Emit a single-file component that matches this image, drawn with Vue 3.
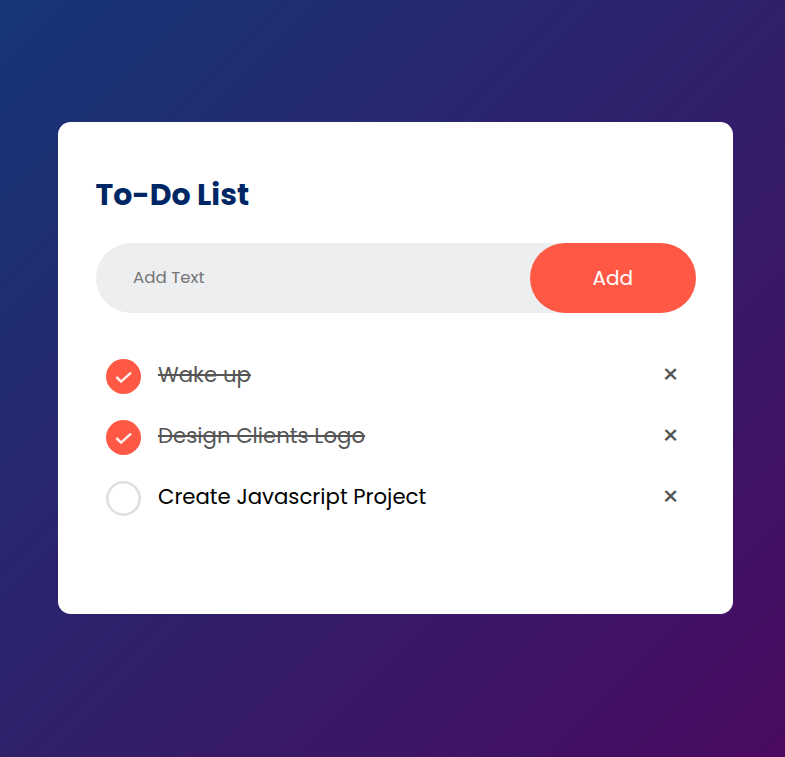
<script setup>
import { ref } from 'vue'

const draft = ref('')
const tasks = ref([
  { id: 1, text: 'Wake up', done: true },
  { id: 2, text: 'Design Clients Logo', done: true },
  { id: 3, text: 'Create Javascript Project', done: false },
])

function addTask() {
  const text = draft.value.trim()
  if (!text) return
  tasks.value.push({ id: Date.now(), text, done: false })
  draft.value = ''
}

function removeTask(id) {
  tasks.value = tasks.value.filter((t) => t.id !== id)
}
</script>

<template>
  <main class="page">
    <section class="card">
      <h2 class="title">To-Do List</h2>
      <form class="row" @submit.prevent="addTask">
        <input v-model="draft" class="field" type="text" placeholder="Add Text" />
        <button class="add" type="submit">Add</button>
      </form>
      <ul class="list">
        <li v-for="task in tasks" :key="task.id" class="item" :class="{ done: task.done }">
          <svg class="mark" viewBox="0 0 35 35" @click="task.done = !task.done">
            <template v-if="task.done">
              <circle cx="17.5" cy="17.5" r="17.5" fill="#ff5945" />
              <path d="M10.4 18 L15.1 22.6 L25 13.6" fill="none" stroke="#ffeeec" stroke-width="2.5" />
            </template>
            <circle v-else cx="17.5" cy="17.5" r="16.2" fill="#fff" stroke="#dfdfdf" stroke-width="2.6" />
          </svg>
          <span class="label"><span>{{ task.text }}</span></span>
          <button class="remove" type="button" @click="removeTask(task.id)">×</button>
        </li>
      </ul>
    </section>
  </main>
</template>

<style>
body {
  margin: 0;
}
</style>

<style scoped>
.page {
  box-sizing: border-box;
  min-height: 100vh;
  padding: 122px 52px 0 58px;
  background: linear-gradient(135deg, #153677, #4a0a60);
  font-family: Poppins, sans-serif;
}
.card {
  box-sizing: border-box;
  height: 492px;
  padding: 50px 37px 0 38px;
  background: #fff;
  border-radius: 12.5px;
}
.title {
  margin: 0 0 26px -0.5px;
  color: #002765;
  font-size: 30px;
  font-weight: 700;
  line-height: 45px;
}
.row {
  display: flex;
  height: 70px;
  margin-bottom: 30px;
  background: #edeef0;
  border-radius: 35px;
}
.field {
  flex: 1;
  min-width: 0;
  padding: 0 0 2px 37px;
  border: 0;
  outline: 0;
  background: transparent;
  font: 400 16.667px/25px Poppins, sans-serif;
}
.field::placeholder {
  color: #757575;
  opacity: 1;
}
.add {
  width: 166px;
  padding: 0 0.5px 0 0;
  border: 0;
  border-radius: 35px;
  background: #ff5945;
  color: #fff;
  font: 400 20px/30px Poppins, sans-serif;
}
.list {
  margin: 0;
  padding: 0 10px;
  list-style: none;
}
.item {
  display: flex;
  align-items: center;
  height: 61px;
  color: #000;
  font-size: 21.25px;
}
.mark {
  width: 35px;
  height: 35px;
  margin: 5px 17px 0 0;
}
.label {
  flex: 1;
  padding-top: 2px;
  line-height: 32px;
  white-space: nowrap;
}
.done {
  color: #555;
}
.done .label > span {
  text-decoration: line-through;
}
.remove {
  width: 50px;
  margin-right: -10px;
  padding: 2px 1px 0 0;
  border: 0;
  background: none;
  color: #555;
  font: 400 27.5px/50px Poppins, sans-serif;
  text-align: center;
}
</style>
